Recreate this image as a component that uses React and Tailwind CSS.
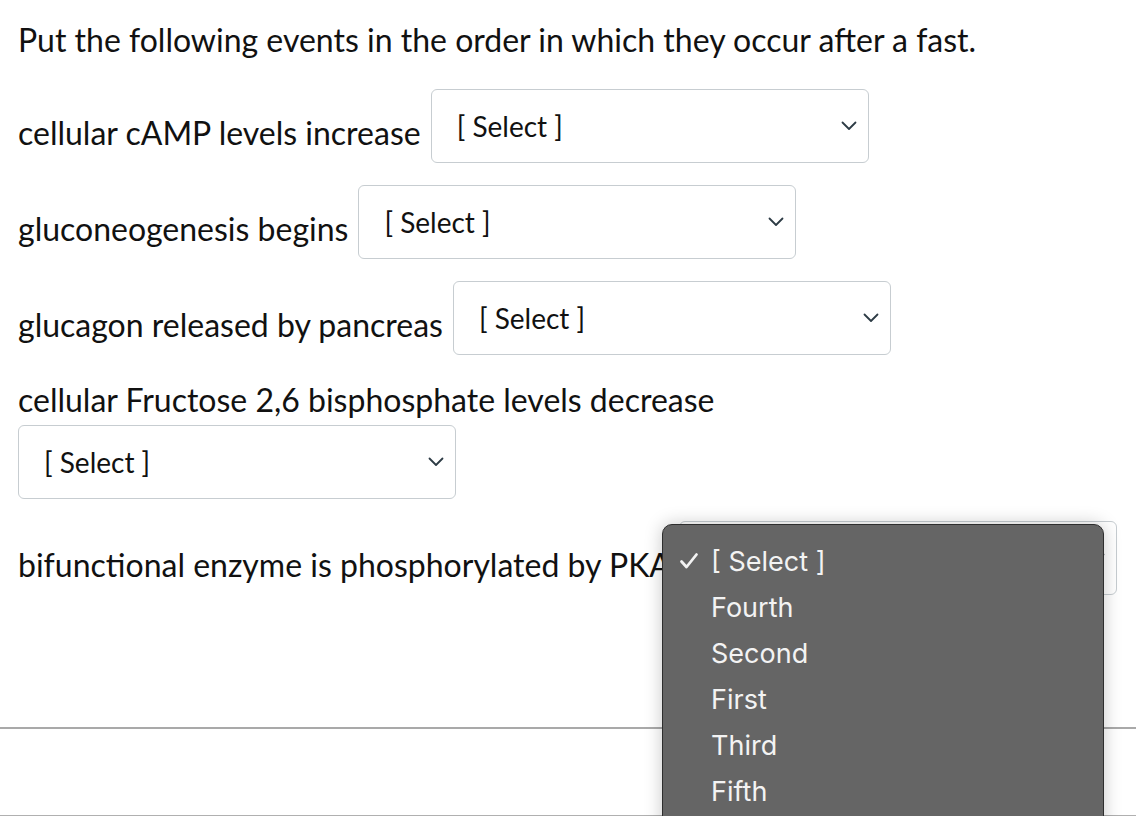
import React from "react";

function Chevron() {
  return (
    <svg width="16" height="10" viewBox="0 0 16 10" className="shrink-0">
      <path d="M1.5 1.5 L8 8 L14.5 1.5" fill="none" stroke="#2d3b45" strokeWidth="1.8" strokeLinecap="round" strokeLinejoin="round" />
    </svg>
  );
}

function Select({ className = "" }) {
  return (
    <div className={"flex h-[74px] w-[438px] shrink-0 items-center justify-between rounded-[6px] border-[1.5px] border-[#c7cdd1] bg-white pl-[25px] pr-[11px] " + className}>
      <span className="text-[28px] leading-none text-[#111]">[ Select ]</span>
      <Chevron />
    </div>
  );
}

const items = ["Fourth", "Second", "First", "Third", "Fifth"];

export default function App() {
  return (
    <div className="relative h-[816px] w-[1136px] overflow-hidden bg-white text-[#111]" style={{ fontFamily: "Lato, 'Open Sans', sans-serif" }}>
      <div className="pl-[18px] pt-[22px]">
        <p className="text-[32px] leading-[36px]">Put the following events in the order in which they occur after a fast.</p>

        <div className="mt-[31px] flex items-start gap-[10px]">
          <span className="mt-[26px] shrink-0 whitespace-nowrap text-[32px] leading-[36px]">cellular cAMP levels increase</span>
          <Select />
        </div>

        <div className="mt-[22px] flex items-start gap-[10px]">
          <span className="mt-[26px] shrink-0 whitespace-nowrap text-[32px] leading-[36px]">gluconeogenesis begins</span>
          <Select />
        </div>

        <div className="mt-[22px] flex items-start gap-[10px]">
          <span className="mt-[26px] shrink-0 whitespace-nowrap text-[32px] leading-[36px]">glucagon released by pancreas</span>
          <Select />
        </div>

        <p className="mt-[27px] text-[32px] leading-[36px]">cellular Fructose 2,6 bisphosphate levels decrease</p>
        <Select className="mt-[7px]" />

        <div className="mt-[22px] flex items-start gap-[8px]">
          <span className="mt-[26px] shrink-0 whitespace-nowrap text-[32px] leading-[36px]">bifunctional enzyme is phosphorylated by PKA</span>
          <div className="relative shrink-0">
            <Select />
            <div
              className="absolute left-[-17px] top-[3px] z-10 h-[320px] w-[442px] rounded-[10px] border border-[#2e2e2e] bg-[#656565] pt-[17px] text-[#f3f3f3] shadow-[0_0_18px_rgba(0,0,0,0.22)]"
              style={{ fontFamily: "Inter, Roboto, 'Noto Sans', sans-serif" }}
            >
              <div className="flex h-[38px] items-center">
                <span className="w-[48px] pl-[16px]">
                  <svg width="20" height="18" viewBox="0 0 20 18">
                    <path d="M2.5 9.5 L7.5 15 L17.5 2.5" fill="none" stroke="#f3f3f3" strokeWidth="2.8" strokeLinecap="round" strokeLinejoin="round" />
                  </svg>
                </span>
                <span className="text-[27px] leading-none">[ Select ]</span>
              </div>
              {items.map((t) => (
                <div key={t} className="mt-[8px] flex h-[38px] items-center">
                  <span className="w-[48px]" />
                  <span className="text-[27px] leading-none">{t}</span>
                </div>
              ))}
            </div>
          </div>
        </div>
      </div>

      <div className="mt-[132px] h-[2px] w-full bg-[#a9a9a9]" />
      <div className="absolute bottom-0 left-0 h-[1px] w-full bg-[#b0b0b0]" />
    </div>
  );
}
